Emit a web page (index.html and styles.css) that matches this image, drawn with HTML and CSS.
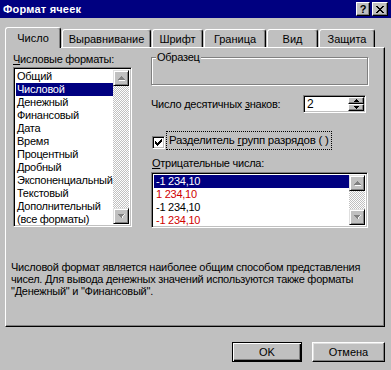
FILE: index.html
```html
<!DOCTYPE html>
<html lang="ru">
<head>
<meta charset="utf-8">
<title>Формат ячеек</title>
<link rel="stylesheet" href="styles.css">
</head>
<body>
<div class="window">
  <div class="titlebar">
    <span class="title">Формат ячеек</span>
    <div class="tbtns">
      <span class="tbtn help">?</span>
      <span class="tbtn close"><svg width="8" height="7" viewBox="0 0 8 7" shape-rendering="crispEdges"><path d="M0 0h2v1h-2zM6 0h2v1h-2zM1 1h2v1h-2zM5 1h2v1h-2zM2 2h4v1h-4zM3 3h2v1h-2zM2 4h4v1h-4zM1 5h2v1h-2zM5 5h2v1h-2zM0 6h2v1h-2zM6 6h2v1h-2z" fill="#000"/></svg></span>
    </div>
  </div>

  <div class="tabs">
    <div class="tab active t1">Число</div>
    <div class="tab t2">Выравнивание</div>
    <div class="tab t3">Шрифт</div>
    <div class="tab t4">Граница</div>
    <div class="tab t5">Вид</div>
    <div class="tab t6">Защита</div>
  </div>

  <div class="panel">
    <div class="top">
      <div class="left">
        <div class="label"><u>Ч</u>исловые форматы:</div>
        <div class="listbox formats">
          <ul class="items">
            <li>Общий</li>
            <li class="sel">Числовой</li>
            <li>Денежный</li>
            <li>Финансовый</li>
            <li>Дата</li>
            <li>Время</li>
            <li>Процентный</li>
            <li>Дробный</li>
            <li>Экспоненциальный</li>
            <li>Текстовый</li>
            <li>Дополнительный</li>
            <li>(все форматы)</li>
          </ul>
          <div class="vscroll">
            <span class="sbtn"><svg width="7" height="5" viewBox="0 0 7 5" shape-rendering="crispEdges"><path d="M4 1h1v1h1v1h1v1h-1v-1h-1v-1h-1zM1 4h6v1h-6z" fill="#fff"/><path d="M3 0h1v1h1v1h1v1h1v1h-7v-1h1v-1h1v-1h1z" fill="#808080"/></svg></span>
            <span class="track"></span>
            <span class="sbtn"><svg width="7" height="5" viewBox="0 0 7 5" shape-rendering="crispEdges"><path d="M0 0h7v1h-1v1h-1v1h-1v1h-1v-1h-1v-1h-1v-1h-1z" fill="#808080"/><path d="M6 1h1v-1h-1zM5 2h1v-1h-1zM4 3h1v-1h-1zM3 4h2v-1h-1v1z" fill="#fff" opacity="0.9"/></svg></span>
          </div>
        </div>
      </div>

      <div class="right">
        <div class="groupbox">
          <span class="legend">Образец</span>
        </div>

        <div class="row spinrow">
          <span>Число десятичных <u>з</u>наков:</span>
          <div class="spin">
            <span class="spinval">2</span>
            <div class="spinbtns">
              <span class="spbtn"><svg width="5" height="3" viewBox="0 0 5 3" shape-rendering="crispEdges"><path d="M2 0h1v1h1v1h1v1h-5v-1h1v-1h1z" fill="#000"/></svg></span>
              <span class="spbtn"><svg width="5" height="3" viewBox="0 0 5 3" shape-rendering="crispEdges"><path d="M0 0h5v1h-1v1h-1v1h-1v-1h-1v-1h-1z" fill="#000"/></svg></span>
            </div>
          </div>
        </div>

        <div class="row checkrow">
          <span class="checkbox"><svg width="7" height="7" viewBox="0 0 7 7" shape-rendering="crispEdges"><path d="M6 0h1v3h-1v1h-1v1h-1v1h-1v1h-1v-1h-1v-1h-1v-3h1v1h1v1h1v-1h1v-1h1v-1h1z" fill="#000"/></svg></span>
          <span class="focuslabel">Разделитель <u>г</u>рупп разрядов ( )</span>
        </div>

        <div class="label neglabel"><u>О</u>трицательные числа:</div>
        <div class="listbox negs">
          <ul class="items">
            <li class="sel">-1 234,10</li>
            <li class="red">1 234,10</li>
            <li>-1 234,10</li>
            <li class="red">-1 234,10</li>
          </ul>
          <div class="vscroll">
            <span class="sbtn"><svg width="7" height="5" viewBox="0 0 7 5" shape-rendering="crispEdges"><path d="M4 1h1v1h1v1h1v1h-1v-1h-1v-1h-1zM1 4h6v1h-6z" fill="#fff"/><path d="M3 0h1v1h1v1h1v1h1v1h-7v-1h1v-1h1v-1h1z" fill="#808080"/></svg></span>
            <span class="track"></span>
            <span class="sbtn"><svg width="7" height="5" viewBox="0 0 7 5" shape-rendering="crispEdges"><path d="M0 0h7v1h-1v1h-1v1h-1v1h-1v-1h-1v-1h-1v-1h-1z" fill="#808080"/><path d="M6 1h1v-1h-1zM5 2h1v-1h-1zM4 3h1v-1h-1zM3 4h2v-1h-1v1z" fill="#fff" opacity="0.9"/></svg></span>
          </div>
        </div>
      </div>
    </div>

    <p class="desc">Числовой формат является наиболее общим способом представления<br>чисел. Для вывода денежных значений используются также форматы<br>"Денежный" и "Финансовый".</p>
  </div>

  <div class="buttons">
    <button class="btn default">OK</button>
    <button class="btn cancel">Отмена</button>
  </div>
</div>
</body>
</html>
```

FILE: styles.css
```css
* { box-sizing: border-box; }

html, body {
  margin: 0;
  padding: 0;
}

body {
  width: 391px;
  height: 370px;
  overflow: hidden;
  background: #c0c0c0;
  font-family: "Liberation Sans", Arial, sans-serif;
  font-size: 11px;
  letter-spacing: -0.25px;
  color: #000;
}

u { text-decoration: underline; text-underline-offset: 1px; }

.window {
  width: 391px;
  height: 370px;
  display: flex;
  flex-direction: column;
}

/* title bar */
.titlebar {
  height: 18px;
  background: #000080;
  display: flex;
  align-items: center;
  justify-content: space-between;
  padding: 0 3px 0 3px;
}

.title {
  color: #fff;
  font-weight: bold;
  font-size: 11px;
  letter-spacing: 0.2px;
}

.tbtns {
  display: flex;
  gap: 2px;
}

.tbtn {
  width: 16px;
  height: 14px;
  background: #c0c0c0;
  border: 1px solid;
  border-color: #fff #000 #000 #fff;
  box-shadow: inset -1px -1px 0 #808080;
  display: flex;
  align-items: center;
  justify-content: center;
  font-weight: bold;
  font-size: 11px;
  letter-spacing: 0;
  line-height: 1;
}

.tbtn.help { width: 14px; }

/* tabs */
.tabs {
  margin-top: 9px;
  height: 20px;
  padding-left: 5px;
  display: flex;
  align-items: flex-end;
  gap: 1px;
  position: relative;
  z-index: 1;
}

.tab {
  height: 18px;
  padding-top: 3px;
  line-height: 13px;
  text-align: center;
  letter-spacing: 0;
  background: #c0c0c0;
  border-top: 1px solid #fff;
  border-left: 1px solid #fff;
  border-right: 1px solid #000;
  border-radius: 3px 3px 0 0;
  box-shadow: inset -1px 0 0 #808080;
}

.tab.active {
  height: 21px;
  padding-top: 4px;
  margin-bottom: -1px;
}

.t1 { width: 56px; }
.t2 { width: 89px; }
.t3 { width: 51px; }
.t4 { width: 62px; }
.t5 { width: 51px; }
.t6 { width: 56px; }

/* panel */
.panel {
  margin-left: 5px;
  width: 380px;
  height: 280px;
  border-top: 1px solid #fff;
  border-left: 1px solid #fff;
  border-right: 1px solid #000;
  border-bottom: 1px solid #000;
  box-shadow: inset -1px -1px 0 #808080;
  padding: 5px 0 0 5px;
}

.top {
  display: flex;
  align-items: flex-start;
}

.left {
  margin-left: 2px;
  width: 119px;
}

.label {
  line-height: 13px;
  height: 13px;
  white-space: nowrap;
}

/* list boxes */
.listbox {
  background: #fff;
  border: 1px solid;
  border-color: #808080 #fff #fff #808080;
  box-shadow: inset 1px 1px 0 #000, inset -1px -1px 0 #c0c0c0;
  padding: 2px 2px 2px 2px;
  display: flex;
}

.formats {
  margin-top: 1px;
  height: 160px;
}

.items {
  list-style: none;
  margin: 0;
  padding: 0;
  flex: 1;
  min-width: 0;
}

.items li {
  height: 13px;
  line-height: 13px;
  padding-left: 2px;
  white-space: nowrap;
}

.formats .items li { padding-left: 1px; }

.items li.sel {
  background: #000080;
  color: #fff;
}

.items li.red { color: #d00000; }

.vscroll {
  width: 16px;
  display: flex;
  flex-direction: column;
  position: relative;
}

.sbtn {
  width: 16px;
  height: 16px;
  background: #c0c0c0;
  border: 1px solid;
  border-color: #dfdfdf #000 #000 #dfdfdf;
  box-shadow: inset 1px 1px 0 #fff, inset -1px -1px 0 #808080;
  display: flex;
  align-items: center;
  justify-content: center;
  flex: none;
}

.track {
  flex: 1;
  background: repeating-conic-gradient(#fff 0 25%, #c0c0c0 0 50%) 0 0 / 2px 2px;
}

/* right column */
.right {
  margin-left: 19px;
  width: 217px;
}

.groupbox {
  position: relative;
  margin-top: 4px;
  height: 28px;
  border: 1px solid #808080;
  box-shadow: inset 1px 1px 0 #fff, 1px 1px 0 #fff;
}

.legend {
  position: absolute;
  top: -7px;
  left: 4px;
  padding: 0 1px;
  line-height: 13px;
  background: #c0c0c0;
}

.row {
  display: flex;
  align-items: center;
}

.spinrow {
  margin-top: 10px;
  height: 18px;
  justify-content: space-between;
  padding-right: 2px;
}

.spin {
  width: 63px;
  height: 18px;
  background: #fff;
  border: 1px solid;
  border-color: #808080 #fff #fff #808080;
  box-shadow: inset 1px 1px 0 #000, inset -1px -1px 0 #c0c0c0;
  padding: 1px;
  display: flex;
}

.spinval {
  flex: 1;
  padding-left: 2px;
  line-height: 14px;
  font-size: 12px;
}

.spinbtns {
  width: 16px;
  display: flex;
  flex-direction: column;
}

.spbtn {
  flex: 1;
  background: #c0c0c0;
  border: 1px solid;
  border-color: #fff #000 #000 #fff;
  box-shadow: inset -1px -1px 0 #808080;
  display: flex;
  align-items: center;
  justify-content: center;
}

.checkrow {
  margin-top: 18px;
  height: 19px;
  align-items: flex-start;
}

.checkbox {
  margin-top: 5px;
  margin-left: 1px;
  width: 13px;
  height: 13px;
  background: #fff;
  border: 1px solid;
  border-color: #808080 #fff #fff #808080;
  box-shadow: inset 1px 1px 0 #000, inset -1px -1px 0 #c0c0c0;
  display: flex;
  align-items: center;
  justify-content: center;
}

.focuslabel {
  margin-left: 1px;
  height: 19px;
  line-height: 17px;
  padding: 0 2px 0 2px;
  border: 1px dotted #000;
  white-space: nowrap;
  font-size: 11.5px;
}

.neglabel {
  margin-top: 7px;
  margin-left: 1px;
}

.negs {
  margin-top: 2px;
  height: 56px;
}

.negs .items li { padding-left: 2px; }

.desc {
  margin: 33px 0 0 0;
  line-height: 12px;
  white-space: nowrap;
}

/* buttons */
.buttons {
  margin-top: 15px;
  display: flex;
  justify-content: flex-end;
  gap: 10px;
  padding-right: 6px;
}

.btn {
  height: 20px;
  font-family: inherit;
  font-size: 11px;
  letter-spacing: 0;
  color: #000;
  background: #c0c0c0;
  border: 1px solid;
  border-color: #fff #000 #000 #fff;
  box-shadow: inset -1px -1px 0 #808080, inset 1px 1px 0 #dfdfdf;
  padding: 0;
  margin: 0;
}

.btn.default {
  width: 70px;
  border: 1px solid #000;
  box-shadow: inset 1px 1px 0 #fff, inset -1px -1px 0 #000, inset -2px -2px 0 #808080;
}

.btn.cancel { width: 73px; }
```
